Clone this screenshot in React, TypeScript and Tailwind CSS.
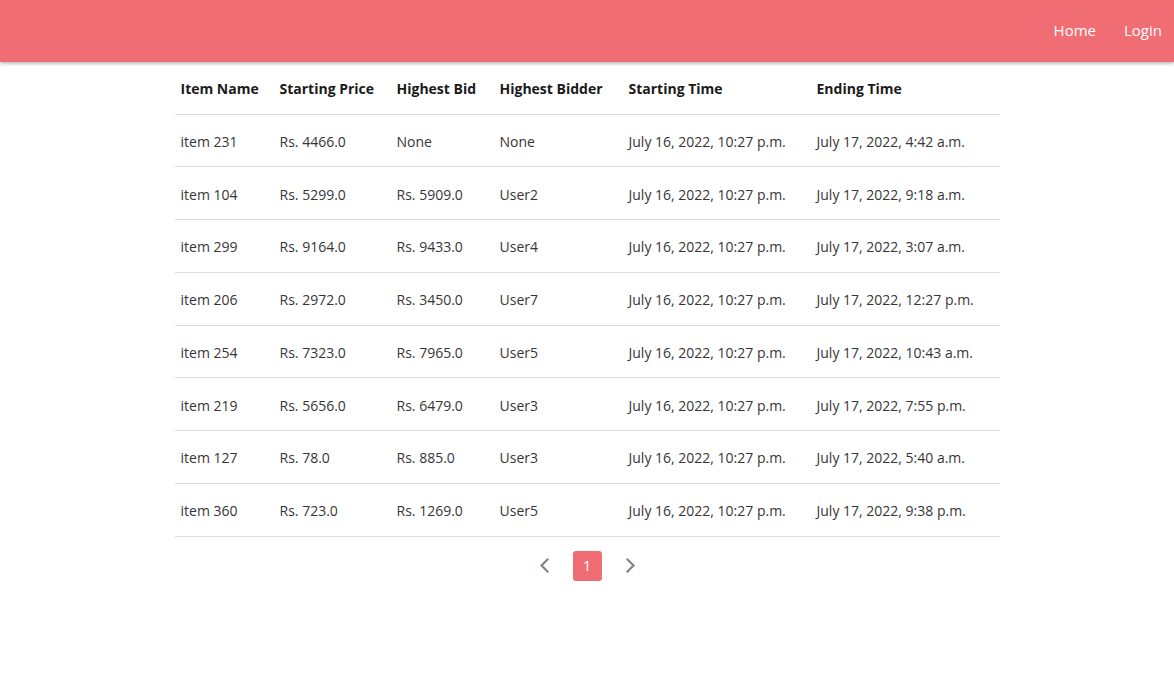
const rows = [
  ["item 231", "Rs. 4466.0", "None", "None", "July 16, 2022, 10:27 p.m.", "July 17, 2022, 4:42 a.m."],
  ["item 104", "Rs. 5299.0", "Rs. 5909.0", "User2", "July 16, 2022, 10:27 p.m.", "July 17, 2022, 9:18 a.m."],
  ["item 299", "Rs. 9164.0", "Rs. 9433.0", "User4", "July 16, 2022, 10:27 p.m.", "July 17, 2022, 3:07 a.m."],
  ["item 206", "Rs. 2972.0", "Rs. 3450.0", "User7", "July 16, 2022, 10:27 p.m.", "July 17, 2022, 12:27 p.m."],
  ["item 254", "Rs. 7323.0", "Rs. 7965.0", "User5", "July 16, 2022, 10:27 p.m.", "July 17, 2022, 10:43 a.m."],
  ["item 219", "Rs. 5656.0", "Rs. 6479.0", "User3", "July 16, 2022, 10:27 p.m.", "July 17, 2022, 7:55 p.m."],
  ["item 127", "Rs. 78.0", "Rs. 885.0", "User3", "July 16, 2022, 10:27 p.m.", "July 17, 2022, 5:40 a.m."],
  ["item 360", "Rs. 723.0", "Rs. 1269.0", "User5", "July 16, 2022, 10:27 p.m.", "July 17, 2022, 9:38 p.m."],
];

const headers = ["Item Name", "Starting Price", "Highest Bid", "Highest Bidder", "Starting Time", "Ending Time"];
const widths = ["w-[99px]", "w-[117px]", "w-[103px]", "w-[129px]", "w-[188px]", "w-[189px]"];

function Chevron({ dir }: { dir: "left" | "right" }) {
  return (
    <svg width="10" height="15" viewBox="0 0 10 15" fill="none" className="text-[#7d8591]">
      <polyline
        points={dir === "left" ? "8.5,1.5 2.5,7.5 8.5,13.5" : "1.5,1.5 7.5,7.5 1.5,13.5"}
        stroke="currentColor"
        strokeWidth="2.2"
        strokeLinecap="square"
      />
    </svg>
  );
}

export default function App() {
  return (
    <div className="min-h-screen bg-white font-['Open_Sans',sans-serif] text-[#363636]">
      {/* Navbar */}
      <nav className="h-[62px] bg-[#f06e73] shadow-[0_2px_3px_rgba(10,10,10,0.25)] flex items-center justify-end gap-[28px] pr-[12px] pb-[1px]">
        <a className="text-[15px] text-white">Home</a>
        <a className="text-[15px] text-white">Login</a>
      </nav>

      <div className="w-[825px] mx-auto">
        <table className="w-full table-fixed border-collapse text-[14px]">
          <thead>
            <tr className="h-[52px] border-b border-[#dbdbdb]">
              {headers.map((h, i) => (
                <th key={h} className={`${widths[i]} px-[6px] pt-[2px] text-left font-bold text-[#1a1a1a]`}>
                  {h}
                </th>
              ))}
            </tr>
          </thead>
          <tbody>
            {rows.map((r) => (
              <tr key={r[0]} className="h-[52.75px] border-b border-[#dbdbdb]">
                {r.map((c, i) => (
                  <td key={i} className="px-[6px] pt-[2px] whitespace-nowrap">
                    {c}
                  </td>
                ))}
              </tr>
            ))}
          </tbody>
        </table>

        {/* Pagination */}
        <div className="flex items-center justify-center gap-[24px] mt-[14px]">
          <Chevron dir="left" />
          <span className="w-[29px] h-[30px] rounded-[3px] bg-[#f06e73] text-white text-[15px] flex items-center justify-center">
            1
          </span>
          <Chevron dir="right" />
        </div>
      </div>
    </div>
  );
}
